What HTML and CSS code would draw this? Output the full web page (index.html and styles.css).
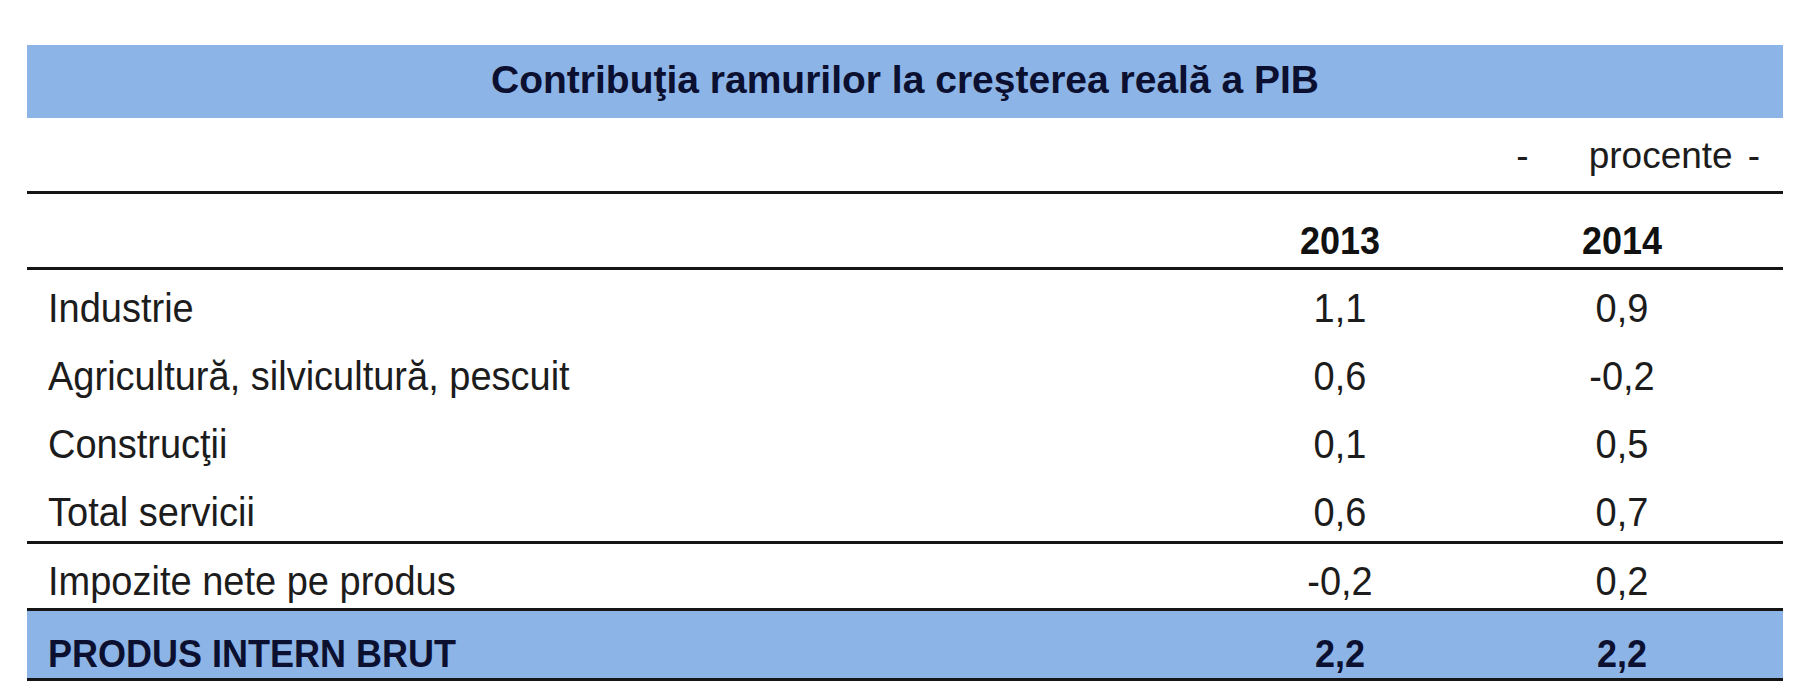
FILE: index.html
```html
<!DOCTYPE html>
<html lang="ro">
<head>
<meta charset="utf-8">
<title>Contribuţia ramurilor la creşterea reală a PIB</title>
<link rel="stylesheet" href="styles.css">
</head>
<body>
<div class="page">
  <div class="table">
    <div class="title-band">Contribuţia ramurilor la creşterea reală a PIB</div>
    <div class="unit-row">
      <span class="dash dash-left">-</span>
      <span class="unit">procente</span>
      <span class="dash">-</span>
    </div>
    <div class="row head-row">
      <span class="label"></span>
      <span class="num">2013</span>
      <span class="num">2014</span>
    </div>
    <div class="group">
      <div class="row data-row first">
        <span class="label">Industrie</span>
        <span class="num">1,1</span>
        <span class="num">0,9</span>
      </div>
      <div class="row data-row">
        <span class="label">Agricultură, silvicultură, pescuit</span>
        <span class="num">0,6</span>
        <span class="num">-0,2</span>
      </div>
      <div class="row data-row">
        <span class="label">Construcţii</span>
        <span class="num">0,1</span>
        <span class="num">0,5</span>
      </div>
      <div class="row data-row last">
        <span class="label">Total servicii</span>
        <span class="num">0,6</span>
        <span class="num">0,7</span>
      </div>
    </div>
    <div class="row tax-row">
      <span class="label">Impozite nete pe produs</span>
      <span class="num">-0,2</span>
      <span class="num">0,2</span>
    </div>
    <div class="row total-row">
      <span class="label">PRODUS INTERN BRUT</span>
      <span class="num">2,2</span>
      <span class="num">2,2</span>
    </div>
  </div>
</div>
</body>
</html>
```

FILE: styles.css
```css
html, body {
  margin: 0;
  padding: 0;
  background: #ffffff;
}

.page {
  padding: 45px 14px 0 27px;
  font-family: "Liberation Sans", Arial, sans-serif;
  color: #1c1c1c;
}

.table {
  width: 1756px;
}

.title-band {
  height: 73px;
  box-sizing: border-box;
  padding-bottom: 4px;
  background: #8db4e6;
  display: flex;
  align-items: center;
  justify-content: center;
  font-size: 39px;
  font-weight: bold;
  color: #0b1030;
}

.unit-row {
  height: 76px;
  box-sizing: border-box;
  display: flex;
  justify-content: flex-end;
  align-items: flex-end;
  padding: 0 23px 14px 0;
  font-size: 37px;
  border-bottom: 3px solid #151515;
}

.dash-left {
  margin-right: 60px;
}

.unit {
  margin-right: 15px;
}

.row {
  display: grid;
  grid-template-columns: 1fr 282px 282px;
  align-items: end;
  padding-right: 20px;
  box-sizing: border-box;
}

.row > span {
  transform: scaleY(1.08);
  transform-origin: center bottom;
}

.label {
  padding-left: 21px;
  white-space: nowrap;
}

.num {
  text-align: center;
}

.head-row {
  height: 76px;
  padding-bottom: 3px;
  font-size: 36px;
  font-weight: bold;
  color: #111111;
  border-bottom: 3px solid #151515;
}

.group {
  border-bottom: 3px solid #151515;
}

.data-row {
  height: 68px;
  padding-bottom: 3px;
  font-size: 38px;
}

.data-row.first {
  height: 65px;
}

.data-row.last {
  height: 70px;
  padding-bottom: 5px;
}

.tax-row {
  height: 67px;
  padding-bottom: 3px;
  font-size: 38px;
  border-bottom: 3px solid #151515;
}

.total-row {
  height: 70px;
  padding-bottom: 1px;
  background: #8db4e6;
  font-size: 36px;
  font-weight: bold;
  color: #0b1030;
  border-bottom: 3px solid #151515;
}
```
